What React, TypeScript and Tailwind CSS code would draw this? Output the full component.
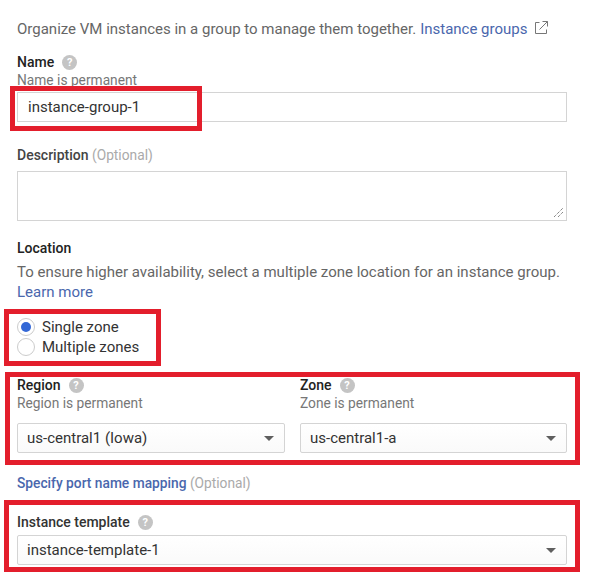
import React from "react";

const Help = () => (
  <span className="ml-[8px] inline-flex h-[15px] w-[15px] items-center justify-center rounded-full bg-[#c4c4c4] text-[11px] font-bold leading-none text-white">?</span>
);

const Arrow = () => (
  <span className="h-0 w-0 border-x-[5px] border-t-[5px] border-x-transparent border-t-[#5f5f5f]" />
);

const Select = ({ value }: { value: string }) => (
  <div className="flex h-[30px] items-center justify-between rounded-[2px] border border-[#d4d4d4] bg-gradient-to-b from-white to-[#fafafa] pl-[9px] pr-[10px] text-[15px] text-[#333]">
    <span>{value}</span>
    <Arrow />
  </div>
);

const Frame = ({ className }: { className: string }) => (
  <div className={`pointer-events-none absolute border-[5px] border-[#e31e2c] ${className}`} />
);

export default function App() {
  return (
    <div className="relative h-[576px] w-[597px] overflow-hidden bg-white pl-[17px] pt-[20px] font-['Roboto',sans-serif] text-[13.75px] text-[#666]">
      <div className="w-[550px]">
        <p className="flex h-[19px] items-center whitespace-nowrap text-[15px] leading-[19px]">
          <span>Organize VM instances in a group to manage them together.</span>
          <span className="ml-[4px] text-[#4a67ad]">Instance groups</span>
          <svg className="ml-[7px] -mt-[4px]" width="15" height="15" viewBox="0 0 15 15" fill="none" stroke="#777" strokeWidth="1">
            <path d="M5.5 2.5H1.5V13.5H12.5V9.5" />
            <path d="M5.5 9.5L13.5 1.5M8.5 1.5H13.5V6.5" />
          </svg>
        </p>

        <div className="mt-[14px] flex h-[18px] items-center text-[14px] font-medium leading-[18px] text-[#222]">
          Name <Help />
        </div>
        <div className="h-[18px] leading-[18px] text-[#777]">Name is permanent</div>
        <div className="mt-[3px] flex h-[30px] items-center border border-[#d4d4d4] pl-[10px] text-[15px] text-[#333]">instance-group-1</div>

        <div className="mt-[24px] h-[19px] text-[14px] font-medium leading-[19px] text-[#444]">
          Description <span className="text-[13.75px] font-normal text-[#aaa]">(Optional)</span>
        </div>
        <div className="relative mt-[6px] h-[50px] border border-[#d4d4d4]">
          <svg className="absolute bottom-[2px] right-[2px]" width="11" height="11" viewBox="0 0 11 11" stroke="#555" strokeWidth="1" strokeDasharray="1 1">
            <path d="M1 10L10 1M5 10L10 5" />
          </svg>
        </div>

        <div className="mt-[18px] h-[19px] text-[14px] font-medium leading-[19px] text-[#222]">Location</div>
        <p className="mt-[4px] h-[20px] whitespace-nowrap text-[15px] leading-[20px]">To ensure higher availability, select a multiple zone location for an instance group.</p>
        <p className="h-[20px] text-[15px] leading-[20px] text-[#4a67ad]">Learn more</p>

        <div className="mt-[15px] flex h-[20px] items-center text-[15px] text-[#333]">
          <span className="flex h-[18px] w-[18px] items-center justify-center rounded-full border border-[#ccc]">
            <span className="h-[10px] w-[10px] rounded-full bg-[#3367d6]" />
          </span>
          <span className="ml-[7px]">Single zone</span>
        </div>
        <div className="flex h-[20px] items-center text-[15px] text-[#333]">
          <span className="h-[18px] w-[18px] rounded-full border border-[#ccc]" />
          <span className="ml-[7px]">Multiple zones</span>
        </div>

        <div className="mt-[19px] grid grid-cols-[268px_267px] gap-x-[15px]">
          <div>
            <div className="flex h-[18px] items-center text-[14px] font-medium leading-[18px] text-[#222]">
              Region <Help />
            </div>
            <div className="h-[18px] leading-[18px] text-[#777]">Region is permanent</div>
            <div className="mt-[11px]"><Select value="us-central1 (Iowa)" /></div>
          </div>
          <div>
            <div className="flex h-[18px] items-center text-[14px] font-medium leading-[18px] text-[#222]">
              Zone <Help />
            </div>
            <div className="h-[18px] leading-[18px] text-[#777]">Zone is permanent</div>
            <div className="mt-[11px]"><Select value="us-central1-a" /></div>
          </div>
        </div>

        <div className="mt-[20px] h-[20px] leading-[20px]">
          <span className="font-medium text-[#4a67ad]">Specify port name mapping</span>{" "}
          <span className="text-[#aaa]">(Optional)</span>
        </div>

        <div className="mt-[20px] flex h-[18px] items-center text-[14px] font-medium leading-[18px] text-[#333]">
          Instance template <Help />
        </div>
        <div className="mt-[4px]"><Select value="instance-template-1" /></div>
      </div>

      <Frame className="left-[10px] top-[86px] h-[45px] w-[192px]" />
      <Frame className="left-[4px] top-[309px] h-[57px] w-[157px]" />
      <Frame className="left-[5px] top-[372px] h-[93px] w-[575px]" />
      <Frame className="left-[4px] top-[500px] h-[72px] w-[576px]" />
    </div>
  );
}
